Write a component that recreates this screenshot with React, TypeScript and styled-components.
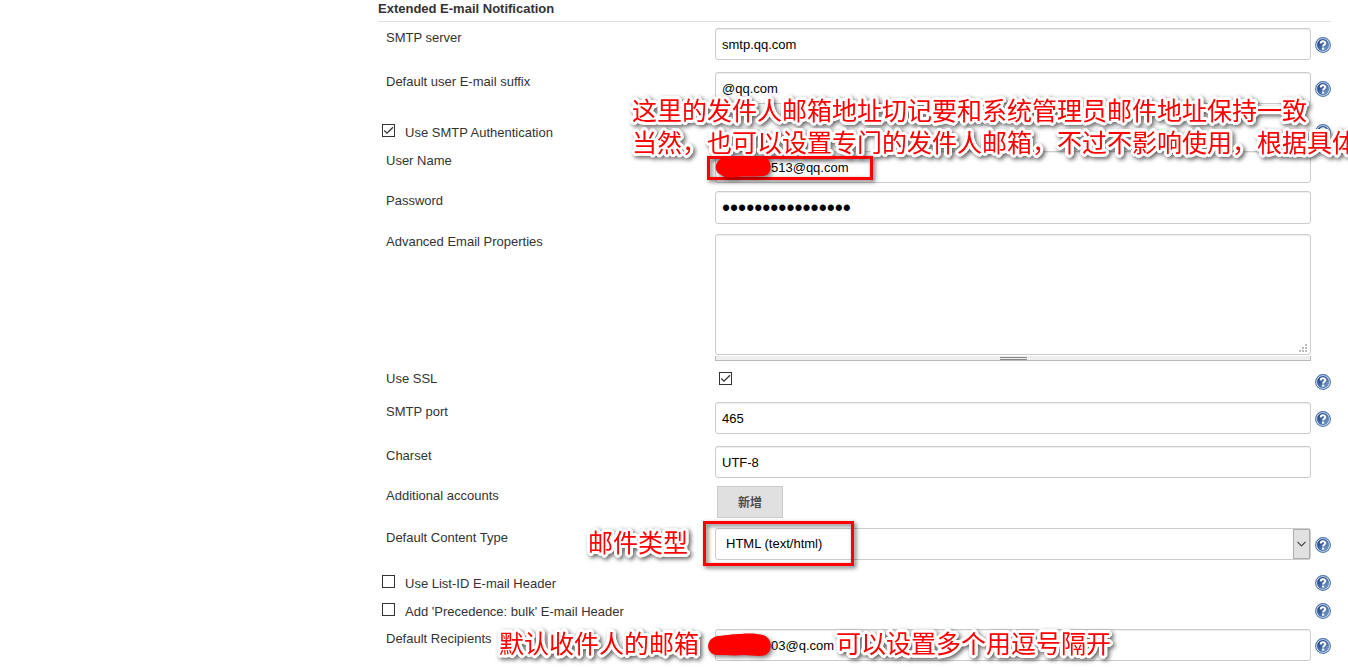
import React, { useState } from "react";
import styled, { createGlobalStyle } from "styled-components";

const GlobalStyle = createGlobalStyle`
  *, *::before, *::after { box-sizing: border-box; }
  body {
    margin: 0;
    background: #fff;
    color: #333;
    font: 13px/18px "Liberation Sans", "Noto Sans CJK SC", sans-serif;
    overflow-x: hidden;
  }
  input, textarea, select, button { font-family: inherit; font-size: inherit; margin: 0; }
`;

const Page = styled.main`
  padding: 0 17px 9px 378px;
  overflow: hidden;
`;

const SectionTitle = styled.h2`
  margin: 0 0 6px;
  padding-bottom: 4px;
  border-bottom: 1px solid #e0e0e0;
  font-size: 13px;
  line-height: 17px;
  font-weight: bold;
`;

const Form = styled.form`
  display: flex;
  flex-direction: column;
`;

const Row = styled.div<{ $gap?: number }>`
  display: grid;
  grid-template-columns: 337px minmax(0, 1fr) 20px;
  align-items: start;
  padding-bottom: ${(p) => p.$gap ?? 12}px;
`;

const CheckGroup = styled.div<{ $before: number; $after: number }>`
  padding: ${(p) => p.$before}px 0 ${(p) => p.$after}px;
`;

const CheckRow = styled.div`
  display: flex;
  align-items: center;
  justify-content: space-between;
  height: 28px;
`;

const CheckLabel = styled.label`
  display: flex;
  align-items: center;
  gap: 10px;
  padding: 1px 0 0 4px;
`;

const Label = styled.label`
  padding: 1px 0 0 8px;
`;

const Field = styled.div`
  position: relative;
  display: flex;
  flex-direction: column;
  align-items: stretch;
`;

const TextInput = styled.input<{ $masked?: boolean }>`
  width: 100%;
  height: 32px;
  padding: 0 6px 0 ${(p) => (p.$masked ? 55 : 6)}px;
  border: 1px solid #ccc;
  border-radius: 3px;
  background: #fff;
  box-shadow: inset 0 1px 1px #eee;
  color: #000;
  outline: none;
`;

const PasswordInput = styled(TextInput)`
  height: 33px;
  padding-top: 2px;
  font-size: 23px;
`;

const TextArea = styled.textarea`
  display: block;
  width: 100%;
  height: 121px;
  padding: 6px;
  border: 1px solid #ccc;
  border-radius: 3px;
  box-shadow: inset 0 1px 1px #eee;
  resize: none;
  outline: none;
`;

const AreaField = styled(Field)`
  padding-top: 2px;
`;

const Grip = styled.svg`
  position: absolute;
  right: 4px;
  bottom: 9px;
`;

const ResizeBar = styled.div`
  display: flex;
  justify-content: center;
  height: 5px;
  margin-top: 1px;
  border: solid #bbb;
  border-width: 0 1px 1px;
  background: #eee;

  &::after {
    content: "";
    width: 27px;
    height: 3px;
    margin-top: 1px;
    border: solid #888;
    border-width: 1px 0;
  }
`;

const Select = styled.select`
  appearance: none;
  width: 100%;
  height: 32px;
  padding: 0 24px 1px 10px;
  border: 1px solid #ccc;
  border-radius: 3px;
  background: #fff;
  color: #000;
  outline: none;
`;

const SelectArrow = styled.span`
  position: absolute;
  right: 1px;
  top: 1px;
  display: grid;
  place-items: center;
  width: 17px;
  height: 30px;
  border: 1px solid #adadad;
  background: #e1e1e1;
  pointer-events: none;
`;

const AddButton = styled.button`
  align-self: flex-start;
  width: 66px;
  height: 32px;
  margin-left: 2px;
  padding: 0 0 2px;
  border: 1px solid #ccc;
  background: #e0e0e0;
  color: #4d4d4d;
  font: bold 12px "Noto Sans CJK SC", sans-serif;
`;

const TickWrap = styled.span`
  position: relative;
  display: block;
  width: 13px;
  height: 13px;
  margin-bottom: 4px;

  svg { position: absolute; inset: 0; pointer-events: none; }
`;

const TickInput = styled.input`
  appearance: none;
  display: block;
  width: 13px;
  height: 13px;
  border: 1px solid #333;
  background: #fff;
`;

const SslCell = styled.div`
  padding: 3px 0 0 4px;
`;

const HelpLink = styled.a`
  display: block;
  width: 16px;
  height: 16px;

  svg { display: block; }
`;

const HelpCell = styled.div<{ $compact?: boolean }>`
  padding: ${(p) => (p.$compact ? 5 : 9)}px 0 0 4px;
`;

/* A round white outline, three pixels wide, built from stacked text shadows. */
const outline = [-3, -2, -1, 0, 1, 2, 3]
  .flatMap((x) => [-3, -2, -1, 0, 1, 2, 3].map((y) => [x, y]))
  .filter(([x, y]) => x * x + y * y <= 10)
  .map(([x, y]) => `${x}px ${y}px 0 #fff`)
  .join(", ");

const Note = styled.p<{ $left: number; $top: number }>`
  position: absolute;
  left: ${(p) => p.$left}px;
  top: ${(p) => p.$top}px;
  z-index: 1;
  margin: 0;
  color: #f00;
  font: 25px/32px "Noto Sans CJK SC", sans-serif;
  white-space: nowrap;
  text-shadow: ${outline};
  filter: drop-shadow(2px 2px 2px rgba(0, 0, 0, 0.6));
  pointer-events: none;
`;

const Frame = styled.div<{ $left: number; $top: number; $width: number; $height: number }>`
  position: absolute;
  left: ${(p) => p.$left}px;
  top: ${(p) => p.$top}px;
  z-index: 2;
  width: ${(p) => p.$width}px;
  height: ${(p) => p.$height}px;
  border: 3px solid #f00;
  filter: drop-shadow(2px 2px 2px rgba(0, 0, 0, 0.6));
  pointer-events: none;
`;

const Scribble = styled.svg<{ $left: number; $top: number }>`
  position: absolute;
  left: ${(p) => p.$left}px;
  top: ${(p) => p.$top}px;
  z-index: 2;
  overflow: visible;
  filter: drop-shadow(2px 2px 2px rgba(0, 0, 0, 0.5));
  pointer-events: none;
`;

function Help({ topic }: { topic: string }) {
  return (
    <HelpLink href="#help" aria-label={`Help for ${topic}`}>
      <svg width="16" height="16" viewBox="0 0 16 16">
        <defs>
          <linearGradient id="helpFill" x1="0" y1="0" x2="1" y2="1">
            <stop offset="0.2" stopColor="#1f4788" />
            <stop offset="1" stopColor="#86a9d6" />
          </linearGradient>
        </defs>
        <circle cx="8" cy="8" r="7.4" fill="#fff" stroke="#4a72ae" strokeWidth="1.1" />
        <circle cx="8" cy="8" r="5.9" fill="url(#helpFill)" stroke="#32599a" strokeWidth="0.4" />
        <path d="M5.7 6.4C5.7 3.7 10.3 3.7 10.3 6.1C10.3 7.7 8.1 7.5 8.1 9.5" fill="none" stroke="#fff" strokeWidth="2" />
        <rect x="7" y="10.6" width="2.2" height="2" fill="#fff" />
      </svg>
    </HelpLink>
  );
}

function Tick({ id, initial = false }: { id: string; initial?: boolean }) {
  const [on, setOn] = useState(initial);
  return (
    <TickWrap>
      <TickInput type="checkbox" id={id} checked={on} onChange={() => setOn(!on)} />
      {on && (
        <svg width="13" height="13" viewBox="0 0 13 13">
          <path d="M2.3 6.5L5 9.2L11 3.2" fill="none" stroke="#333" strokeWidth="1.3" />
        </svg>
      )}
    </TickWrap>
  );
}

export default function App() {
  return (
    <>
      <GlobalStyle />
      <Page>
        <SectionTitle>Extended E-mail Notification</SectionTitle>
        <Form onSubmit={(e) => e.preventDefault()}>
          <Row>
            <Label htmlFor="server">SMTP server</Label>
            <Field><TextInput id="server" defaultValue="smtp.qq.com" /></Field>
            <HelpCell><Help topic="SMTP server" /></HelpCell>
          </Row>
          <Row>
            <Label htmlFor="suffix">Default user E-mail suffix</Label>
            <Field>
              <TextInput id="suffix" defaultValue="@qq.com" />
              <Note $left={-83} $top={21}>
                这里的发件人邮箱地址切记要和系统管理员邮件地址保持一致
                <br />
                当然，也可以设置专门的发件人邮箱，不过不影响使用，根据具体
              </Note>
            </Field>
            <HelpCell><Help topic="Default user E-mail suffix" /></HelpCell>
          </Row>
          <CheckGroup $before={2} $after={5}>
            <CheckRow>
              <CheckLabel htmlFor="auth"><Tick id="auth" initial />Use SMTP Authentication</CheckLabel>
              <Help topic="Use SMTP Authentication" />
            </CheckRow>
          </CheckGroup>
          <Row $gap={8}>
            <Label htmlFor="user">User Name</Label>
            <Field>
              <TextInput id="user" $masked defaultValue="513@qq.com" />
              <Frame $left={-8} $top={5} $width={166} $height={24} />
              <Scribble $left={0} $top={6} width="56" height="22" viewBox="0 0 56 22">
                <path d="M9 1C20 -1 38 0 48 0C58 1 58 18 49 19C37 20 28 19 22 20C14 22 9 20 6 18C-2 15 -1 3 9 1Z" fill="#f00" />
              </Scribble>
            </Field>
          </Row>
          <Row $gap={8}>
            <Label htmlFor="password">Password</Label>
            <Field><PasswordInput id="password" type="password" defaultValue="abcdefghijklmnop" /></Field>
          </Row>
          <Row $gap={8}>
            <Label htmlFor="props">Advanced Email Properties</Label>
            <AreaField>
              <TextArea id="props" />
              <Grip width="8" height="8" viewBox="0 0 8 8" fill="#bbb">
                <path d="M6 0h2v2h-2zM3 3h2v2h-2zM6 3h2v2h-2zM0 6h2v2h-2zM3 6h2v2h-2zM6 6h2v2h-2z" />
              </Grip>
              <ResizeBar />
            </AreaField>
          </Row>
          <Row>
            <Label htmlFor="ssl">Use SSL</Label>
            <SslCell><Tick id="ssl" initial /></SslCell>
            <HelpCell $compact><Help topic="Use SSL" /></HelpCell>
          </Row>
          <Row>
            <Label htmlFor="port">SMTP port</Label>
            <Field><TextInput id="port" defaultValue="465" /></Field>
            <HelpCell><Help topic="SMTP port" /></HelpCell>
          </Row>
          <Row $gap={8}>
            <Label htmlFor="charset">Charset</Label>
            <Field><TextInput id="charset" defaultValue="UTF-8" /></Field>
          </Row>
          <Row $gap={10}>
            <Label htmlFor="accounts">Additional accounts</Label>
            <Field><AddButton id="accounts" type="button">新增</AddButton></Field>
          </Row>
          <Row $gap={8}>
            <Label htmlFor="content">Default Content Type</Label>
            <Field>
              <Select id="content" defaultValue="html">
                <option value="html">HTML (text/html)</option>
                <option value="plain">Plain Text (text/plain)</option>
              </Select>
              <SelectArrow>
                <svg width="9" height="6" viewBox="0 0 9 6">
                  <path d="M0.5 0.8L4.5 4.8L8.5 0.8" fill="none" stroke="#444" strokeWidth="1.2" />
                </svg>
              </SelectArrow>
              <Frame $left={-12} $top={-7} $width={151} $height={45} />
              <Note $left={-127} $top={-3}>邮件类型</Note>
            </Field>
            <HelpCell><Help topic="Default Content Type" /></HelpCell>
          </Row>
          <CheckGroup $before={1} $after={4}>
            <CheckRow>
              <CheckLabel htmlFor="listid"><Tick id="listid" />Use List-ID E-mail Header</CheckLabel>
              <Help topic="Use List-ID E-mail Header" />
            </CheckRow>
            <CheckRow>
              <CheckLabel htmlFor="bulk"><Tick id="bulk" />Add 'Precedence: bulk' E-mail Header</CheckLabel>
              <Help topic="Add 'Precedence: bulk' E-mail Header" />
            </CheckRow>
          </CheckGroup>
          <Row $gap={0}>
            <Label htmlFor="recipients">Default Recipients</Label>
            <Field>
              <TextInput id="recipients" $masked defaultValue="03@q.com" />
              <Scribble $left={-7} $top={5} width="63" height="24" viewBox="0 0 63 24">
                <path d="M10 2C20 1 25 0 33 0C43 -1 50 0 55 1C65 4 65 18 57 21C52 23 43 21 36 21C26 22 17 21 9 21C-3 20 -3 4 10 2Z" fill="#f00" />
              </Scribble>
              <Note $left={-216} $top={-3}>默认收件人的邮箱</Note>
              <Note $left={121} $top={-3}>可以设置多个用逗号隔开</Note>
            </Field>
            <HelpCell><Help topic="Default Recipients" /></HelpCell>
          </Row>
        </Form>
      </Page>
    </>
  );
}
